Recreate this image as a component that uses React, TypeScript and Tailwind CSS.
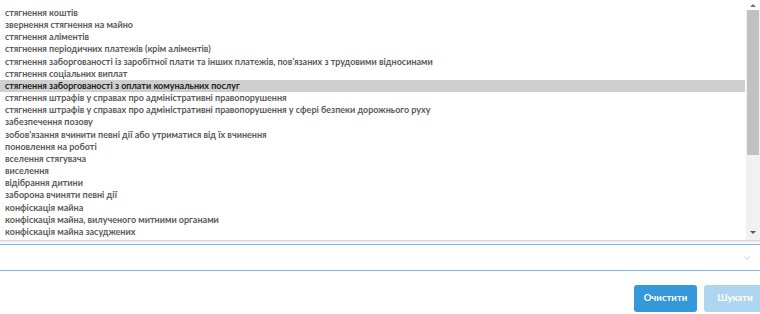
import { ChevronDown } from 'lucide-react'

const items = [
  'стягнення коштів',
  'звернення стягнення на майно',
  'стягнення аліментів',
  'стягнення періодичних платежів (крім аліментів)',
  'стягнення заборгованості із заробітної плати та інших платежів, пов’язаних з трудовими відносинами',
  'стягнення соціальних виплат',
  'стягнення заборгованості з оплати комунальних послуг',
  'стягнення штрафів у справах про адміністративні правопорушення',
  'стягнення штрафів у справах про адміністративні правопорушення у сфері безпеки дорожнього руху',
  'забезпечення позову',
  'зобов’язання вчинити певні дії або утриматися від їх вчинення',
  'поновлення на роботі',
  'вселення стягувача',
  'виселення',
  'відібрання дитини',
  'заборона вчиняти певні дії',
  'конфіскація майна',
  'конфіскація майна, вилученого митними органами',
  'конфіскація майна засуджених',
]

const SELECTED = 6

export default function App() {
  return (
    <div className="w-[760px] h-[314px] bg-white overflow-hidden font-['Lato',sans-serif]">
      {/* dropdown list */}
      <div className="flex h-[241px] border-b border-[#d8d8d8] shadow-[0_1px_2px_rgba(0,0,0,0.12)]">
        <ul className="flex-1 pt-[7px] pr-[1px]">
          {items.map((t, i) => (
            <li
              key={i}
              className={[
                'h-[12.17px] leading-[12px] pl-[5px] text-[9px] whitespace-nowrap font-bold',
                i === SELECTED ? 'bg-[#cfcfcf] text-[#222]' : 'text-[#5a5a5a]',
              ].join(' ')}
            >
              {t}
            </li>
          ))}
        </ul>
        {/* scrollbar */}
        <div className="w-[14px] flex flex-col bg-[#f1f1f1]">
          <div className="h-[10px] flex items-center justify-center bg-white">
            <span className="w-0 h-0 border-x-[3px] border-x-transparent border-b-[3px] border-b-[#777]" />
          </div>
          <div className="h-[145px] mx-[1px] bg-[#c1c1c1]" />
          <div className="flex-1" />
          <div className="h-[16px] flex items-center justify-center">
            <span className="w-0 h-0 border-x-[3px] border-x-transparent border-t-[3px] border-t-[#555]" />
          </div>
        </div>
      </div>

      {/* select */}
      <div className="mt-[3px] h-[27px] border-y border-[#7ab8e6] flex items-center justify-end pr-[8px]">
        <ChevronDown className="w-[10px] h-[10px] text-[#a9bccf]" strokeWidth={2} />
      </div>

      {/* actions */}
      <div className="flex justify-end gap-[7px] mt-[14px] -mr-[6px]">
        <button className="w-[63px] h-[27px] rounded-[3px] bg-[#3498db] text-white text-[9.5px] font-bold">
          Очистити
        </button>
        <button className="w-[62px] h-[27px] rounded-[3px] bg-[#aed6f1] text-white text-[9.5px] font-bold">
          Шукати
        </button>
      </div>
    </div>
  )
}
